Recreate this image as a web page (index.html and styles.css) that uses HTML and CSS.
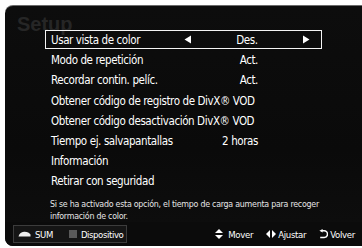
FILE: index.html
```html
<!DOCTYPE html>
<html lang="es">
<head>
<meta charset="utf-8">
<link rel="stylesheet" href="styles.css">
</head>
<body>
<div class="panel">
  <h1 class="title">Setup</h1>
  <ul class="menu">
    <li class="row selected">
      <span class="label">Usar vista de color</span>
      <span class="value">
        <svg class="arrow" width="8" height="9" viewBox="0 0 8 9"><path d="M7 0.5 L0.5 4.5 L7 8.5 Z" fill="#fff"/></svg>
        <span class="val-text">Des.</span>
        <svg class="arrow" width="8" height="9" viewBox="0 0 8 9"><path d="M1 0.5 L7.5 4.5 L1 8.5 Z" fill="#fff"/></svg>
      </span>
    </li>
    <li class="row"><span class="label">Modo de repetición</span><span class="value"><span class="val-text">Act.</span></span></li>
    <li class="row"><span class="label">Recordar contin. pelíc.</span><span class="value"><span class="val-text">Act.</span></span></li>
    <li class="row"><span class="label">Obtener código de registro de DivX® VOD</span></li>
    <li class="row"><span class="label">Obtener código desactivación DivX® VOD</span></li>
    <li class="row"><span class="label">Tiempo ej. salvapantallas</span><span class="value"><span class="val-text">2 horas</span></span></li>
    <li class="row"><span class="label">Información</span></li>
    <li class="row"><span class="label">Retirar con seguridad</span></li>
  </ul>
  <p class="help">Si se ha activado esta opción, el tiempo de carga aumenta para recoger información de color.</p>
  <div class="footer">
    <div class="keys">
      <span class="key">
        <svg width="13" height="6" viewBox="0 0 13 6"><path d="M0.5 5.5 C1 3 3 1 6 0.8 C9 0.6 11.5 1.8 12.5 3.5 L12.5 5.5 Z" fill="#eee"/></svg>
        SUM
      </span>
      <span class="key"><span class="square"></span>Dispositivo</span>
    </div>
    <div class="hints">
      <span class="hint gap5">
        <svg width="8" height="10" viewBox="0 0 8 10"><path d="M4 0 L8 4 L0 4 Z M0 6 L8 6 L4 10 Z" fill="#fff"/></svg>
        Mover
      </span>
      <span class="hint">
        <svg width="10" height="8" viewBox="0 0 10 8"><path d="M4 0 L0 4 L4 8 Z M6 0 L10 4 L6 8 Z" fill="#fff"/></svg>
        Ajustar
      </span>
      <span class="hint">
        <svg width="9" height="10" viewBox="0 0 9 10"><path d="M2.5 1.8 H5.2 A3.3 3.3 0 0 1 5.2 8.4 H1.2" fill="none" stroke="#fff" stroke-width="1.5"/><path d="M3.6 0 L0.4 1.8 L3.6 3.6 Z" fill="#fff"/></svg>
        Volver
      </span>
    </div>
  </div>
</div>
</body>
</html>
```
FILE: styles.css
```css
html, body {
  margin: 0;
  padding: 0;
  background: #ffffff;
  width: 362px;
  height: 248px;
  overflow: hidden;
}
body {
  padding: 5px 0 2px 5px;
  box-sizing: border-box;
  font-family: "DejaVu Sans", "Liberation Sans", sans-serif;
  font-stretch: condensed;
}
.panel {
  width: 362px;
  height: 241px;
  background: linear-gradient(180deg, #0d0d0d 0%, #0a0a0a 60%, #0e0e0e 100%);
  border-top: 1px solid #6a6a6a;
  border-radius: 8px 0 0 8px;
  box-sizing: border-box;
  display: flex;
  flex-direction: column;
  color: #fff;
}
.title {
  margin: 4px 0 0 12px;
  font-family: "Liberation Sans", sans-serif;
  font-size: 20px;
  font-weight: bold;
  color: #262626;
  line-height: 28px;
  height: 18px;
}
.menu {
  list-style: none;
  margin: 2px 0 0 40px;
  padding: 0;
  width: 277px;
}
.row {
  display: flex;
  align-items: center;
  height: 20.2px;
  box-sizing: border-box;
  padding-left: 5px;
  font-size: 11.5px;
  letter-spacing: -0.4px;
  border: 1px solid transparent;
}
.row.selected {
  border-color: #f4f4f4;
  height: 19px;
  margin-bottom: 1.2px;
}
.label {
  flex: 0 0 auto;
  white-space: nowrap;
}
.value {
  margin-left: auto;
  display: flex;
  align-items: center;
}
.row:not(.selected) .value {
  margin-right: 63px;
}
.row.selected .value {
  position: relative;
  margin-right: 11px;
  width: 126px;
}
.value .arrow:first-child { margin-right: auto; }
.value .arrow:last-child { margin-left: auto; }
.row.selected .val-text {
  position: absolute;
  left: 0;
  right: 0;
  text-align: center;
}
.help {
  margin: 6px 0 0 45px;
  font-size: 8.8px;
  letter-spacing: -0.25px;
  line-height: 12px;
  color: #e6e6e6;
  width: 275px;
}
.footer {
  margin-top: auto;
  height: 24px;
  display: flex;
  align-items: center;
  justify-content: space-between;
  padding: 0 12px 0 8px;
  background: #0b0b0b;
  border-radius: 0 0 0 8px;
}
.keys {
  display: flex;
  align-items: center;
  gap: 16px;
  height: 16px;
  border: 1px solid #3c3c3c;
  background: #151515;
  padding: 0 3px 0 4px;
  font-size: 9.5px;
  letter-spacing: -0.4px;
}
.key {
  display: flex;
  align-items: center;
  gap: 4px;
}
.square {
  width: 8px;
  height: 8px;
  background: #5a5a5a;
  display: inline-block;
}
.hints {
  display: flex;
  align-items: center;
  gap: 13px;
  font-size: 9.5px;
  letter-spacing: -0.3px;
}
.hint {
  display: flex;
  align-items: center;
  gap: 2px;
}
.hint.gap5 {
  gap: 5px;
}
```
